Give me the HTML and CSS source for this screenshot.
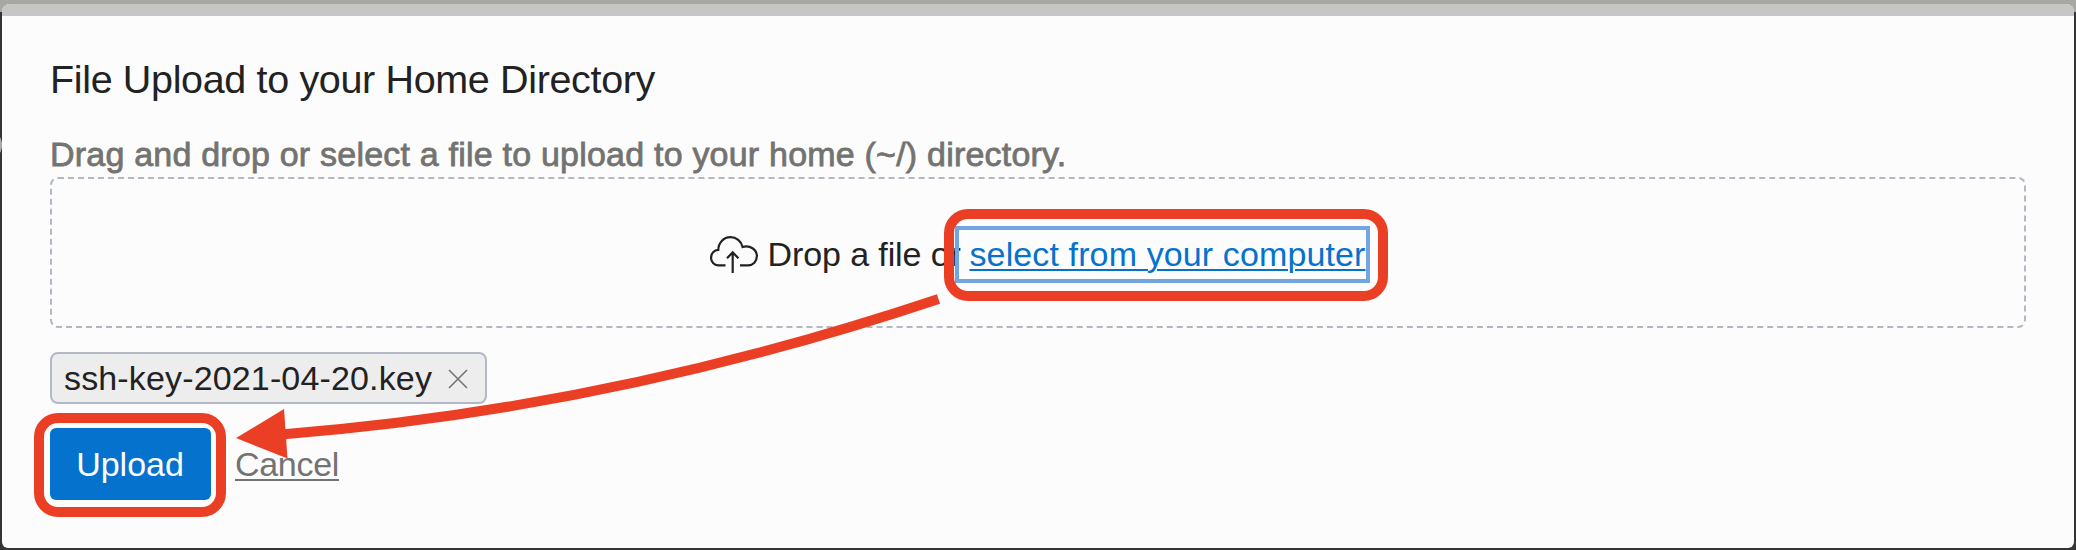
FILE: index.html
```html
<!DOCTYPE html>
<html lang="en">
<head>
<meta charset="utf-8">
<title>File Upload</title>
<link rel="stylesheet" href="styles.css">
</head>
<body>
<div class="backdrop">
  <section class="dialog">
    <div class="dialog-bar"></div>
    <div class="dialog-body">
      <h1 class="title">File Upload to your Home Directory</h1>
      <p class="label">Drag and drop or select a file to upload to your home (~/) directory.</p>
      <div class="dropzone">
        <svg class="cloud" viewBox="0 0 48 38" width="48" height="38">
          <path d="M15.5 29.3H8.2A7.2 7.2 0 0 1 1.1 21.8C1.1 17.4 4.2 14.2 8.3 13.9C8.3 6.8 13.6 1.2 20.4 1.2C26.4 1.2 31.2 5.2 32.6 11C40 8.600 46.900 13.600 46.900 20.100C46.900 25.300 43 29.300 38.200 29.300H30"/>
          <path d="M22.700 37V16.500M17 22.300L22.700 16.300L28.400 22.300"/>
        </svg>
        <span class="drop-text">Drop a file or</span>
        <a class="select-link">select from your computer</a>
      </div>
      <div class="chip">
        <span class="chip-name">ssh-key-2021-04-20.key</span>
        <svg class="remove" viewBox="0 0 20 20" width="20" height="20"><path d="M1 1L19 19M19 1L1 19"/></svg>
      </div>
      <div class="actions">
        <button class="upload">Upload</button>
        <a class="cancel">Cancel</a>
      </div>
    </div>
  </section>
  <svg class="annotations" viewBox="0 0 2076 550" width="2076" height="550">
    <rect x="949" y="214" width="434" height="82" rx="19"/>
    <rect x="39" y="418" width="182" height="94" rx="19"/>
    <path d="M284 434.200Q611 408.500 938.500 299"/>
    <polygon points="236,438 284,409 287.500,458.500"/>
  </svg>
</div>
</body>
</html>
```
FILE: styles.css
```css
* { box-sizing: border-box; }
body {
  margin: 0;
  font-family: "Liberation Sans", Arial, sans-serif;
  font-size: 34px;
  color: #222;
}
.backdrop {
  position: relative;
  width: 2076px;
  height: 550px;
  padding: 4px 2px 2px;
  overflow: hidden;
  background:
    radial-gradient(ellipse 2px 8px at 0 145px, #aaa 80%, transparent),
    linear-gradient(#a7a7a4 12px, #353535 12px);
}
.dialog {
  height: 544px;
  border-radius: 8px 8px 6px 6px;
  overflow: hidden;
  background: #fcfcfc;
}
.dialog-bar { height: 12px; background: #c6c6c6; }
.dialog-body { padding: 40px 48px 0; }
.title {
  margin: 0 0 30px;
  font-size: 39.5px;
  font-weight: 400;
  line-height: 46px;
  letter-spacing: -0.35px;
}
.label {
  margin: 0 0 1px;
  line-height: 44px;
  letter-spacing: 0.21px;
  color: #737371;
  -webkit-text-stroke: 0.8px #737371;
}
.dropzone {
  display: flex;
  align-items: center;
  justify-content: center;
  height: 151px;
  padding-top: 4px;
  border: 2px dashed #b2b8c2;
  border-radius: 8px;
}
.cloud { margin-right: 9px; fill: none; stroke: #222; stroke-width: 2.2; }
.drop-text { width: 192px; white-space: nowrap; letter-spacing: -0.1px; line-height: 49px; }
.select-link {
  height: 49px;
  line-height: 49px;
  padding: 0 0 0 10px;
  letter-spacing: 0.12px;
  color: #0572ce;
  text-decoration: underline 2px;
  text-underline-offset: 3px;
  outline: 4px solid #73a5e1;
}
.chip {
  display: flex;
  align-items: center;
  width: 437px;
  height: 52px;
  margin-top: 24px;
  padding-left: 12px;
  border: 2px solid #b2b8c5;
  border-radius: 8px;
  background: #ededed;
}
.chip-name { width: 370px; margin-right: 14px; letter-spacing: 0.15px; white-space: nowrap; }
.remove { margin-top: 2px; fill: none; stroke: #737373; stroke-width: 1.6; }
.actions { display: flex; align-items: center; gap: 24px; margin-top: 24px; }
.upload {
  width: 161px;
  height: 72px;
  padding: 0 1px 0 0;
  border: 0;
  border-radius: 6px;
  background: #0572ce;
  color: #fcfcfc;
  font: inherit;
  line-height: 72px;
}
.cancel {
  line-height: 72px;
  letter-spacing: -0.3px;
  color: #737373;
  text-decoration: underline 2px;
  text-underline-offset: 3px;
}
.annotations { position: absolute; left: 0; top: 0; fill: none; stroke: #ea3f25; stroke-width: 10; }
.annotations polygon { fill: #ea3f25; stroke: none; }
```
